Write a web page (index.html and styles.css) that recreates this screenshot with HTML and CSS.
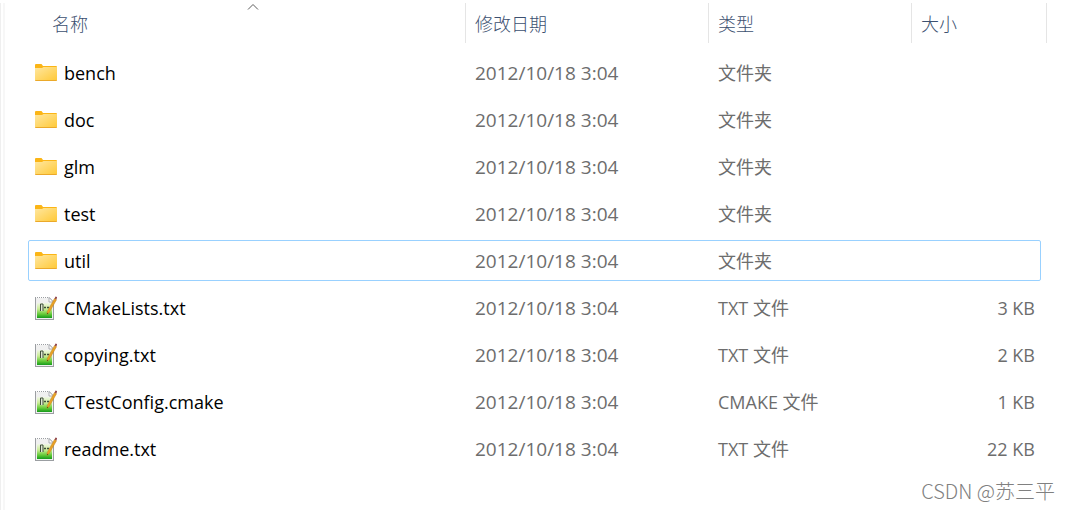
FILE: index.html
```html
<!DOCTYPE html>
<html lang="zh-CN">
<head>
    <meta charset="UTF-8">
    <meta name="viewport" content="width=device-width, initial-scale=1.0">
    <title>glm</title>
    <link rel="stylesheet" href="styles.css">
</head>
<body>

<svg class="sprite" aria-hidden="true">
    <defs>
        <linearGradient id="folderFill" x1="0" y1="0" x2="1" y2="1">
            <stop offset="0" stop-color="#ffe7a0"/>
            <stop offset="1" stop-color="#ffc937"/>
        </linearGradient>
        <linearGradient id="noteFill" x1="0" y1="0" x2="0" y2="1">
            <stop offset="0" stop-color="#f0f6e6"/>
            <stop offset="0.4" stop-color="#c9ec94"/>
            <stop offset="0.75" stop-color="#62c937"/>
            <stop offset="1" stop-color="#159a1c"/>
        </linearGradient>
    </defs>
    <symbol id="folder" viewBox="0 0 22 24">
        <path d="M0 4q0-1 1-1h5.5l1.5 2h13q1 0 1 1v3H0z" fill="#fbb516"/>
        <path d="M0 7h7l1.500-1H22v13q0 .5-1 .5H1q-1 0-1-.5z" fill="url(#folderFill)"/>
        <path d="M0 19h22q0 1-1 1H1q-1 0-1-1z" fill="#eba92a"/>
    </symbol>
    <symbol id="note" viewBox="0 0 22 24">
        <path d="M0 1h14l5 5v18H0z" fill="#9b9ea2"/>
        <path d="M1 2h13l4 4v17H1z" fill="#f0f0f0"/>
        <path d="M1 1.500h13" stroke="#fff" stroke-dasharray="1 1"/>
        <path d="M14 1.500V6h4.500z" fill="#fff" stroke="#9a9da2" stroke-width=".8"/>
        <path d="M2 7h15v15H2z" fill="url(#noteFill)"/>
        <path d="M5.500 15V8H8v7" fill="#dfe8d4" stroke="#3f4c3a"/>
        <path d="M9 11.500h2m1 0h2M10 10.500v2M13 10.500v2" stroke="#3f4c3a"/>
        <path d="M19.500 2.500l2 1.200-7.300 12.800-2.200 1.700.3-2.800z" fill="#e9a226" stroke="#c07f1c" stroke-width=".5"/>
        <path d="M19.500 2.500l.9-1.700q.4-.6 1 0l.6.500q.3.300 0 .8l-.8 1.400z" fill="#92474b"/>
        <path d="M12 18.200l.2-1.500.9.700z" fill="#40301c"/>
    </symbol>
</svg>

<div class="explorer">
    <div class="splitter"></div>
    <main class="files">
        <table>
            <colgroup>
                <col>
                <col class="col-date">
                <col class="col-type">
                <col class="col-size">
            </colgroup>
            <thead>
                <tr>
                    <th class="name" aria-sort="ascending">
                        <button type="button">名称</button>
                        <svg class="sort" viewBox="0 0 12 7" aria-hidden="true"><path d="M1 6.500l5-5 5 5" fill="none" stroke="#5c5c5c"/></svg>
                    </th>
                    <th><button type="button">修改日期</button></th>
                    <th><button type="button">类型</button></th>
                    <th class="size"><button type="button">大小</button></th>
                </tr>
            </thead>
            <tbody>
                <tr>
                    <td class="name"><div class="file"><svg class="icon"><use href="#folder"/></svg>bench</div></td>
                    <td class="date">2012/10/18 3:04</td>
                    <td>文件夹</td>
                    <td class="size"></td>
                </tr>
                <tr>
                    <td class="name"><div class="file"><svg class="icon"><use href="#folder"/></svg>doc</div></td>
                    <td class="date">2012/10/18 3:04</td>
                    <td>文件夹</td>
                    <td class="size"></td>
                </tr>
                <tr>
                    <td class="name"><div class="file"><svg class="icon"><use href="#folder"/></svg>glm</div></td>
                    <td class="date">2012/10/18 3:04</td>
                    <td>文件夹</td>
                    <td class="size"></td>
                </tr>
                <tr>
                    <td class="name"><div class="file"><svg class="icon"><use href="#folder"/></svg>test</div></td>
                    <td class="date">2012/10/18 3:04</td>
                    <td>文件夹</td>
                    <td class="size"></td>
                </tr>
                <tr class="focused">
                    <td class="name"><div class="file"><svg class="icon"><use href="#folder"/></svg>util</div></td>
                    <td class="date">2012/10/18 3:04</td>
                    <td>文件夹</td>
                    <td class="size"></td>
                </tr>
                <tr>
                    <td class="name"><div class="file"><svg class="icon"><use href="#note"/></svg>CMakeLists.txt</div></td>
                    <td class="date">2012/10/18 3:04</td>
                    <td>TXT 文件</td>
                    <td class="size">3 KB</td>
                </tr>
                <tr>
                    <td class="name"><div class="file"><svg class="icon"><use href="#note"/></svg>copying.txt</div></td>
                    <td class="date">2012/10/18 3:04</td>
                    <td>TXT 文件</td>
                    <td class="size">2 KB</td>
                </tr>
                <tr>
                    <td class="name"><div class="file"><svg class="icon"><use href="#note"/></svg>CTestConfig.cmake</div></td>
                    <td class="date">2012/10/18 3:04</td>
                    <td>CMAKE 文件</td>
                    <td class="size">1 KB</td>
                </tr>
                <tr>
                    <td class="name"><div class="file"><svg class="icon"><use href="#note"/></svg>readme.txt</div></td>
                    <td class="date">2012/10/18 3:04</td>
                    <td>TXT 文件</td>
                    <td class="size">22 KB</td>
                </tr>
            </tbody>
        </table>
    </main>
    <div class="watermark">CSDN @苏三平</div>
</div>

</body>
</html>
```
FILE: styles.css
```css
* {
    box-sizing: border-box;
}
body {
    margin: 0;
    background-color: #fff;
    color: #000;
    font-family: "Open Sans", "Noto Sans CJK SC", sans-serif;
    font-size: 18px;
    line-height: 24px;
}
.sprite {
    position: absolute;
    width: 0;
    height: 0;
}
.explorer {
    position: relative;
    display: flex;
    min-height: 100vh;
    padding-top: 3px;
}
.splitter {
    flex: none;
    width: 5px;
    border-left: 1px solid #efefef;
    border-right: 2px solid #f7f7f7;
}
.files {
    flex: 1;
    padding: 0 29px 0 23px;
}
table {
    width: 100%;
    margin-top: -6px;
    table-layout: fixed;
    border-collapse: separate;
    border-spacing: 0 6px;
}
.col-date {
    width: 243px;
}
.col-type {
    width: 203px;
}
.col-size {
    width: 129px;
}

/* Header */
th {
    position: relative;
    height: 43px;
    padding: 0;
    vertical-align: top;
}
th button {
    display: block;
    width: 100%;
    height: 40px;
    padding: 0 9px;
    border: none;
    border-right: 1px solid #e5e5e5;
    background: none;
    color: #3c5070;
    font-family: "Noto Sans CJK SC", sans-serif;
    font-size: 18px;
    font-weight: 300;
    text-align: left;
}
th.name button {
    padding-left: 24px;
}
/* the size heading runs a little past the rows */
th.size button {
    width: 135px;
}
.sort {
    position: absolute;
    top: 0;
    left: 50%;
    width: 12px;
    height: 7px;
}

/* Rows */
td {
    height: 41px;
    padding: 0 9px;
    color: #6d6d6d;
    white-space: nowrap;
}
td.name {
    padding: 0 7px;
    color: #000;
}
td.date {
    font-size: 19px;
}
td.size {
    padding: 0 6px;
    text-align: right;
}
.file {
    display: flex;
    align-items: center;
    gap: 7px;
}
.icon {
    flex: none;
    width: 22px;
    height: 24px;
}
.focused {
    outline: 1px solid #99d1ff;
    outline-offset: -1px;
    border-radius: 2px;
}

.watermark {
    position: absolute;
    right: 15px;
    bottom: 7px;
    color: #808080;
    font-family: "Noto Sans CJK SC", sans-serif;
    font-size: 20px;
    font-weight: 300;
}
```
